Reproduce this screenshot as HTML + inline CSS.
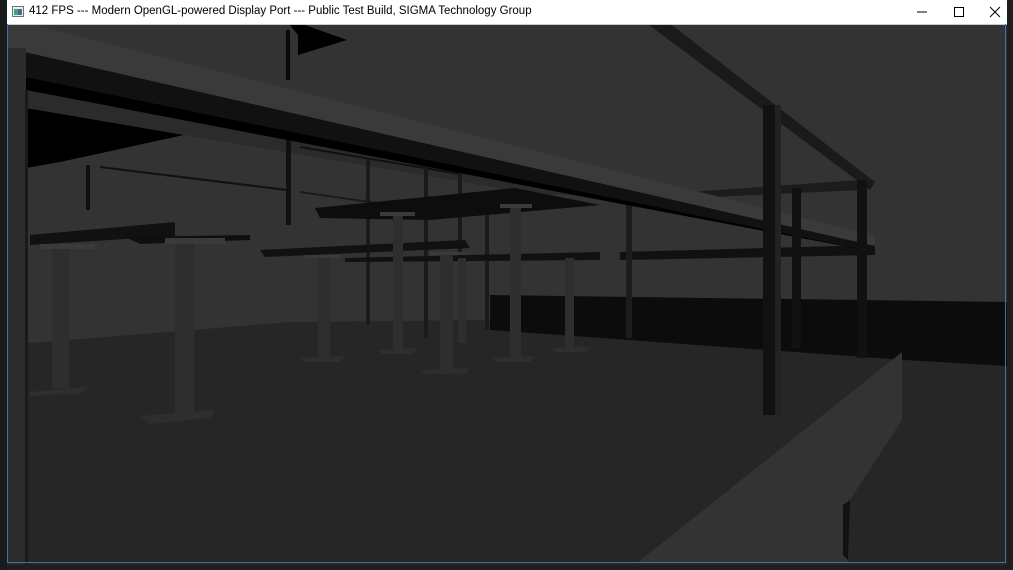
<!DOCTYPE html>
<html><head><meta charset="utf-8"><style>
html,body{margin:0;padding:0;width:1013px;height:570px;overflow:hidden;background:#1e1e1e;font-family:"Liberation Sans",sans-serif}
#title{position:absolute;left:7px;top:0;width:1000px;height:24px;background:#fff;border-bottom:1px solid #ccc}
#title span{position:absolute;left:22px;top:5px;font-size:11.5px;color:#000;font-family:"Liberation Sans",sans-serif}
</style></head><body>
<div style="position:absolute;left:0;top:0;width:7px;height:570px;background:#1b1b1b"></div>
<div id="title">
<svg style="position:absolute;left:5px;top:6px" width="12" height="11"><rect x="0.5" y="0.5" width="11" height="10" fill="#eee" stroke="#678"/><rect x="2" y="3" width="4" height="6" fill="#3a7"/><rect x="6" y="3" width="4" height="6" fill="#568"/></svg>
<span>412 FPS --- Modern OpenGL-powered Display Port --- Public Test Build, SIGMA Technology Group</span>
<svg style="position:absolute;left:905px;top:6px" width="90" height="12"><line x1="5" y1="6" x2="15" y2="6" stroke="#000"/><rect x="42.5" y="1.5" width="9" height="9" fill="none" stroke="#000"/><path d="M78 1 L88 11 M88 1 L78 11" stroke="#000"/></svg>
</div>
<svg style="position:absolute;left:7px;top:25px" width="1000" height="540" viewBox="7 25 1000 540">
<rect x="7" y="25" width="1000" height="540" fill="#333"/>
<!-- floor -->
<polygon points="7,345 290,322 490,320 1007,348 1007,565 7,565" fill="#262626"/>
<!-- dark band -->
<polygon points="490,295 1007,302 1007,366 905,360 490,330" fill="#0c0c0c"/>
<!-- upper black shelf -->
<polygon points="26,108 184,135 60,162 26,168" fill="#000"/>
<polygon points="250,25 290,25 298,35 298,55 347,40 305,25 275,25" fill="#000"/>
<rect x="286" y="30" width="4" height="50" fill="#0a0a0a"/>
<!-- ceiling beam stubs under beam -->
<polygon points="26,90 26,108 540,195 574,195" fill="#2b2b2b"/>
<!-- thin lines/beams background -->
<polyline points="100,167 287,190" stroke="#111" stroke-width="2" fill="none"/>
<polyline points="300,147 460,174" stroke="#111" stroke-width="2" fill="none"/>
<polyline points="300,192 460,215" stroke="#1a1a1a" stroke-width="2" fill="none"/>
<rect x="86" y="165" width="4" height="45" fill="#111"/>
<rect x="286" y="140" width="5" height="85" fill="#111"/>
<rect x="366" y="158" width="4" height="167" fill="#1a1a1a"/>
<rect x="424" y="168" width="4" height="170" fill="#1a1a1a"/>
<rect x="458" y="172" width="4" height="165" fill="#1a1a1a"/>
<rect x="485" y="200" width="4" height="130" fill="#1a1a1a"/>
<!-- right railing -->
<polygon points="649,25 672,25 875,182 870,190" fill="#1a1a1a"/>
<polygon points="672,25 680,25 875,178 875,182" fill="#333"/>
<polygon points="690,192 860,180 860,190 690,198" fill="#1c1c1c"/>
<polygon points="620,252 875,245 875,255 620,260" fill="#111"/>
<rect x="626" y="190" width="6" height="148" fill="#1c1c1c"/>
<!-- main beam -->
<polygon points="7,25 34,25 875,236 875,246 7,48" fill="#3a3a3a"/>
<polygon points="7,48 875,246 875,252 26,77" fill="#111"/>
<polygon points="26,77 875,252 574,195 26,90" fill="#000"/>
<rect x="8" y="48" width="18" height="517" fill="#2c2c2c"/>
<rect x="25" y="90" width="3" height="475" fill="#1a1a1a"/>
<rect x="763" y="105" width="18" height="310" fill="#111"/>
<rect x="775" y="105" width="6" height="310" fill="#222"/>
<rect x="792" y="188" width="9" height="160" fill="#111"/>
<rect x="857" y="180" width="10" height="178" fill="#111"/>
<!-- tables -->
<polygon points="30,235 175,222 175,236 30,245" fill="#111"/>
<polygon points="125,237 250,235 250,240 140,244" fill="#0f0f0f"/>
<polygon points="315,208 515,188 600,205 430,220 320,218" fill="#0d0d0d"/>
<polygon points="260,250 465,240 470,248 265,257" fill="#111"/>
<polygon points="345,258 600,252 600,260 345,262" fill="#111"/>
<g fill="#2e2e2e">
<rect x="52" y="248" width="17" height="140"/><polygon points="30,392 90,386 80,394 30,396"/>
<rect x="175" y="243" width="19" height="172"/><polygon points="140,416 215,410 210,418 150,424"/>
<rect x="318" y="256" width="12" height="102"/><polygon points="300,358 345,356 340,362 305,362"/>
<rect x="393" y="213" width="10" height="138"/><polygon points="378,350 418,348 412,354 382,354"/>
<rect x="440" y="253" width="13" height="118"/><polygon points="420,370 470,368 465,374 425,374"/>
<rect x="510" y="205" width="11" height="155"/><polygon points="492,358 536,356 530,362 498,362"/>
<rect x="565" y="258" width="9" height="92"/><polygon points="550,348 590,347 585,352 555,352"/>
<rect x="458" y="258" width="8" height="85"/>
</g>
<g fill="#3a3a3a">
<rect x="40" y="244" width="55" height="5"/><rect x="165" y="238" width="60" height="6"/>
<rect x="380" y="212" width="35" height="4"/><rect x="500" y="204" width="32" height="4"/>
<rect x="305" y="255" width="35" height="3"/><rect x="430" y="252" width="35" height="3"/>
</g>
<!-- parapet wall -->
<polygon points="902,352 902,420 850,500 848,563 637,563" fill="#333"/>
<polygon points="843,505 850,500 848,560 843,555" fill="#111"/>
</svg>
<div style="position:absolute;left:7px;top:24px;width:999px;height:539px;border:1px solid #3a74b0;box-sizing:border-box;border-top:none"></div>
</body></html>
